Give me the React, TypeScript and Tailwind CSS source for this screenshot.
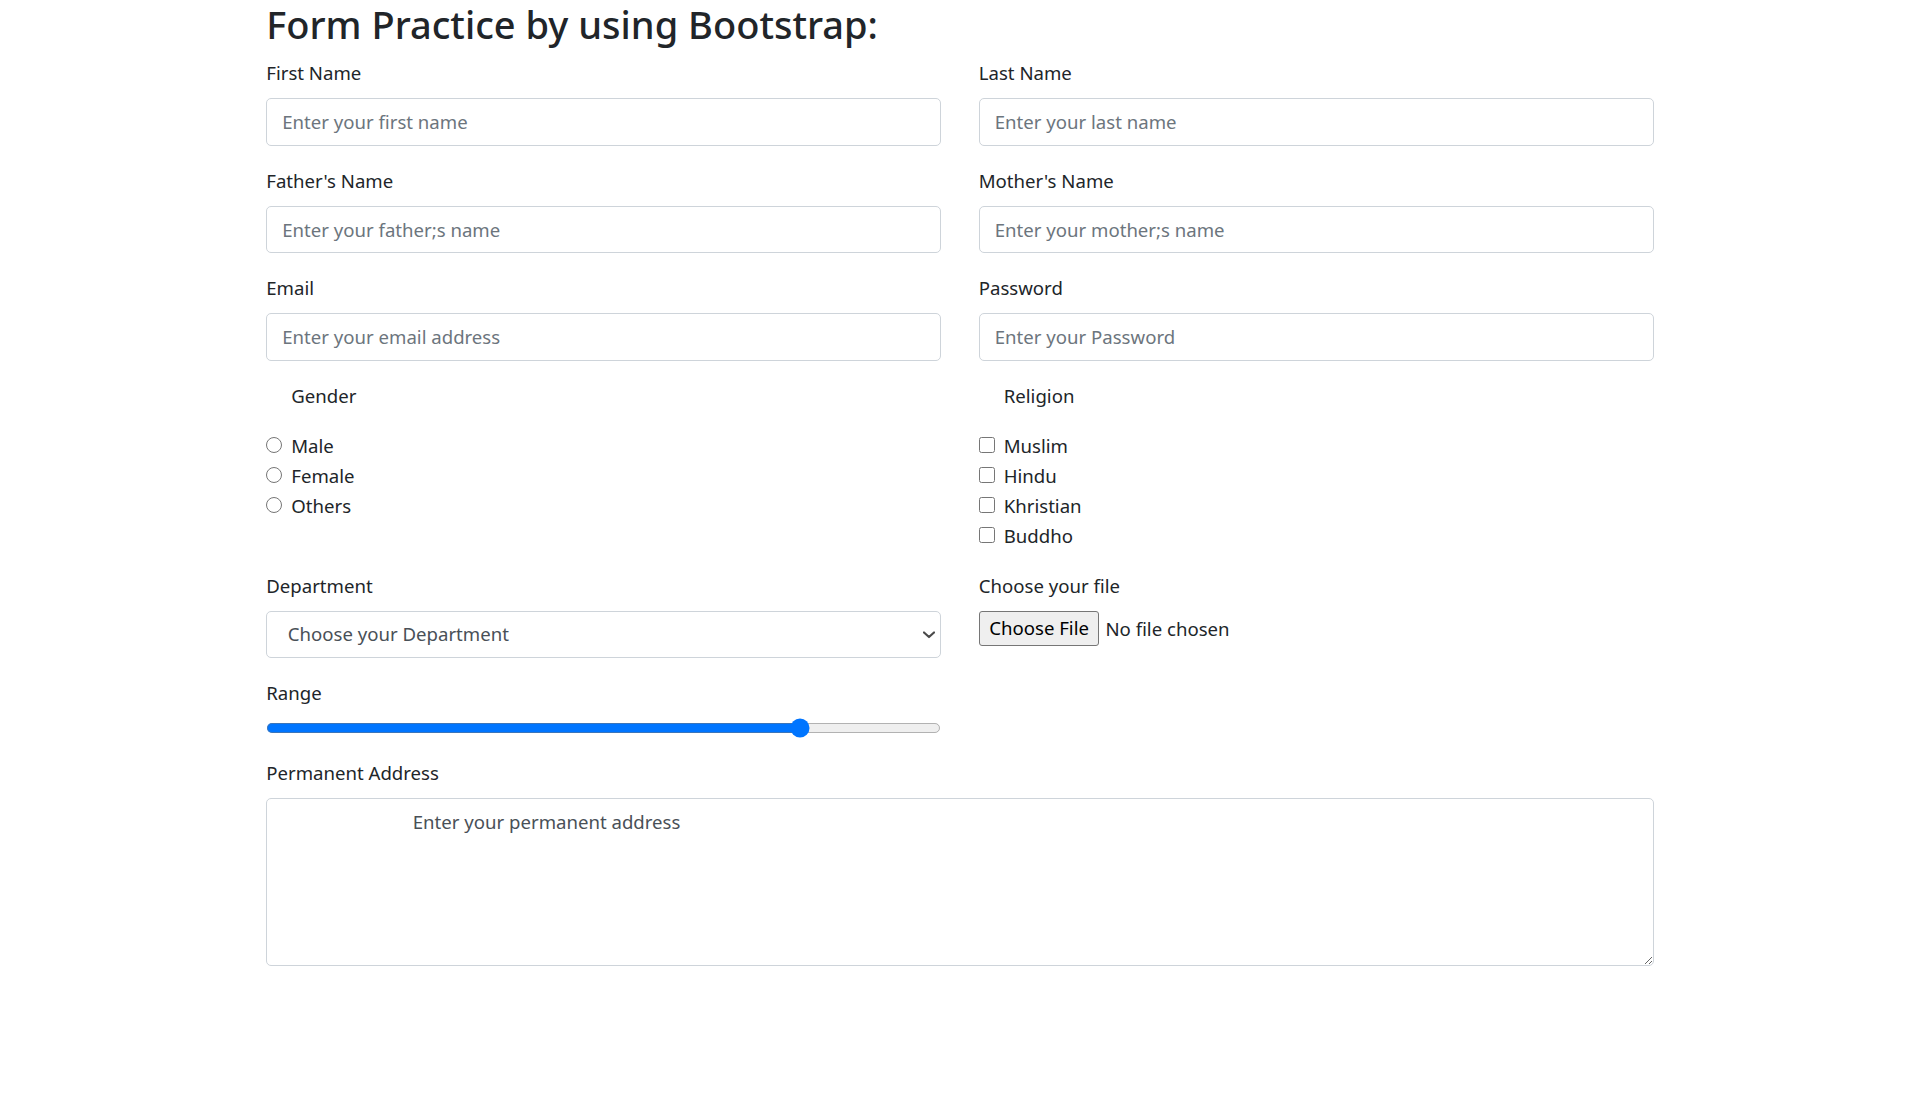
import React from 'react';

const inputClass =
  'block w-full h-[47.5px] border border-[#ced4da] rounded-[5px] bg-white px-[15px] py-[7.5px] text-[18.6px] leading-[30px] text-[#495057] placeholder:text-[#6c757d] outline-none';

interface FieldProps {
  label: string;
  placeholder: string;
  type?: string;
}

const Field: React.FC<FieldProps> = ({ label, placeholder, type = 'text' }) => {
  return (
    <div className="mb-[20px]">
      <label className="block mb-[10px]">{label}</label>
      <input type={type} placeholder={placeholder} className={inputClass} />
    </div>
  );
};

interface CheckGroupProps {
  title: string;
  type: 'radio' | 'checkbox';
  name: string;
  options: string[];
}

const CheckGroup: React.FC<CheckGroupProps> = ({ title, type, name, options }) => {
  return (
    <div className="mb-[20px]">
      <div className="pl-[25px] mb-[20px]">{title}</div>
      {options.map((option) => (
        <label key={option} className="flex items-start">
          <input
            type={type}
            name={name}
            value={option}
            className="mt-[6.5px] w-[16px] h-[16px] shrink-0"
          />
          <span className="ml-[9px]">{option}</span>
        </label>
      ))}
    </div>
  );
};

// the textarea content is indented in the original markup
const leading = '                           ';

export default function App() {
  return (
    <div className="min-h-screen bg-white font-['Noto_Sans',sans-serif] text-[18.6px] leading-[30px] text-[#212529]">
      <div className="mx-auto w-[1425px] px-[18.75px]">
        <h2 className="text-[38px] leading-[48px] font-medium mb-[10px]">
          Form Practice by using Bootstrap:
        </h2>
        <form>
          <div className="grid grid-cols-2 gap-x-[37.5px] items-start">
            <Field label="First Name" placeholder="Enter your first name" />
            <Field label="Last Name" placeholder="Enter your last name" />
            <Field label="Father's Name" placeholder="Enter your father;s name" />
            <Field label="Mother's Name" placeholder="Enter your mother;s name" />
            <Field label="Email" type="email" placeholder="Enter your email address" />
            <Field label="Password" type="password" placeholder="Enter your Password" />

            <CheckGroup title="Gender" type="radio" name="gender" options={['Male', 'Female', 'Others']} />
            <CheckGroup
              title="Religion"
              type="checkbox"
              name="religion"
              options={['Muslim', 'Hindu', 'Khristian', 'Buddho']}
            />

            <div className="mb-[20px]">
              <label className="block mb-[10px]">Department</label>
              <div className="relative">
                <select
                  defaultValue=""
                  className="block w-full h-[47.5px] appearance-none border border-[#ced4da] rounded-[5px] bg-white pl-[20.5px] pr-[40px] py-[7.5px] text-[18.6px] leading-[30px] text-[#495057] outline-none"
                >
                  <option value="">Choose your Department</option>
                  <option value="cse">CSE</option>
                  <option value="eee">EEE</option>
                  <option value="bba">BBA</option>
                </select>
                <svg
                  className="absolute right-[6px] top-[20px] pointer-events-none"
                  width="12"
                  height="8"
                  viewBox="0 0 12 8"
                  fill="none"
                >
                  <path d="M1 1.5L6 6L11 1.5" stroke="#4a4a4a" strokeWidth="2.2" strokeLinecap="round" strokeLinejoin="round" />
                </svg>
              </div>
            </div>

            <div className="mb-[20px]">
              <label className="block mb-[10px]">Choose your file</label>
              <input
                type="file"
                className="block w-full text-[18.6px] leading-[30px] text-[#212529] file:mr-[6px] file:bg-[#efefef] file:border file:border-solid file:border-[#767676] file:rounded-[3px] file:px-[9.5px] file:py-[1.5px] file:text-[#000] file:leading-[30px]"
              />
            </div>

            <div className="mb-[20px]">
              <label className="block mb-[10px]">Range</label>
              <div className="w-[540px] [zoom:1.25]">
                <input type="range" min={0} max={100} defaultValue={80} className="block w-full" />
              </div>
            </div>
            <div />

            <div className="col-span-2 mb-[20px]">
              <label className="block mb-[10px]">Permanent Address</label>
              <textarea
                rows={5}
                defaultValue={leading + 'Enter your permanent address'}
                className="block w-full h-[167.5px] border border-[#ced4da] rounded-[5px] bg-white px-[15px] py-[7.5px] text-[18.6px] leading-[30px] text-[#495057] outline-none"
              />
            </div>
          </div>
        </form>
      </div>
    </div>
  );
}
